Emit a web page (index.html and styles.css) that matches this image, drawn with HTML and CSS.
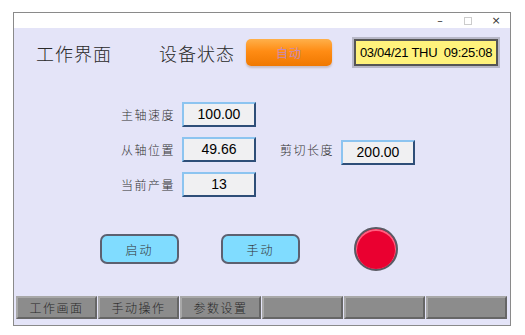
FILE: index.html
```html
<!DOCTYPE html>
<html lang="zh">

<head>
    <meta charset="UTF-8">
    <meta name="viewport" content="width=device-width, initial-scale=1.0">
    <title>工作界面</title>
    <link rel="stylesheet" href="styles.css">
</head>

<body>
    <div class="window">
        <div class="titlebar">
            <span class="win-btn">&#8211;</span>
            <span class="win-btn win-max"></span>
            <span class="win-btn">&#215;</span>
        </div>

        <div class="content">
            <div class="header">
                <h1 class="caption">工作界面</h1>
                <h2 class="caption caption-status">设备状态</h2>
                <div class="mode-btn">自动</div>
                <div class="clock">
                    <div class="clock-inner">03/04/21&nbsp;THU&nbsp;&nbsp;09:25:08</div>
                </div>
            </div>

            <div class="params">
                <div class="param-row">
                    <span class="label">主轴速度</span>
                    <div class="value">100.00</div>
                </div>
                <div class="param-row">
                    <span class="label">从轴位置</span>
                    <div class="value">49.66</div>
                    <span class="label label-cut">剪切长度</span>
                    <div class="value value-cut">200.00</div>
                </div>
                <div class="param-row">
                    <span class="label">当前产量</span>
                    <div class="value">13</div>
                </div>
            </div>

            <div class="actions">
                <button class="action-btn">启动</button>
                <button class="action-btn action-manual">手动</button>
                <div class="lamp"></div>
            </div>

            <div class="tabs">
                <div class="tab">工作画面</div>
                <div class="tab">手动操作</div>
                <div class="tab">参数设置</div>
                <div class="tab"></div>
                <div class="tab"></div>
                <div class="tab"></div>
            </div>
        </div>
    </div>
</body>

</html>
```

FILE: styles.css
```css
body {
    margin: 0;
    padding: 0;
    background-color: #fff;
    font-family: "Noto Sans CJK SC", "Liberation Sans", sans-serif;
}

.window {
    margin: 12px 0 0 13px;
    width: 496px;
    height: 312px;
    border: 1px solid #8a8a8a;
    display: flex;
    flex-direction: column;
}

.titlebar {
    height: 15px;
    background-color: #fff;
    display: flex;
    justify-content: flex-end;
    align-items: center;
    padding-right: 8px;
    gap: 16px;
}

.win-btn {
    width: 12px;
    font-family: "DejaVu Sans", sans-serif;
    font-size: 11px;
    line-height: 15px;
    color: #333;
    text-align: center;
}

.win-max {
    width: 6px;
    height: 6px;
    border: 1px solid #ccc;
    margin: 0 2px;
}

.content {
    flex: 1;
    background-color: #e4e4f8;
    display: flex;
    flex-direction: column;
}

.header {
    display: flex;
    align-items: center;
    height: 31px;
    margin-top: 9px;
    padding-left: 22px;
}

.caption {
    margin: 0;
    font-size: 18px;
    font-weight: 300;
    letter-spacing: 1px;
    color: #2a2a2a;
    width: 74px;
    white-space: nowrap;
}

.caption-status {
    margin-left: 49px;
}

.mode-btn {
    margin-left: 13px;
    width: 86px;
    height: 27px;
    border-radius: 5px;
    background: linear-gradient(#ffb04a, #ff8c14 45%, #f07800);
    box-shadow: 0 2px 2px rgba(120, 80, 40, 0.25);
    color: #c58ab8;
    font-size: 12px;
    text-align: center;
    line-height: 27px;
    letter-spacing: 1px;
}

.clock {
    margin-left: 20px;
    width: 148px;
    height: 31px;
    box-sizing: border-box;
    border: 2px solid #b8b8c8;
}

.clock-inner {
    height: 100%;
    box-sizing: border-box;
    border: 2px solid #555;
    background-color: #fff27c;
    font-family: "Liberation Sans", Arial, sans-serif;
    font-size: 13px;
    line-height: 23px;
    text-align: center;
    color: #000;
    white-space: nowrap;
    letter-spacing: -0.3px;
}

.params {
    margin-top: 34px;
    padding-left: 107px;
    display: flex;
    flex-direction: column;
    gap: 10px;
}

.param-row {
    display: flex;
    align-items: center;
    height: 25px;
}

.label {
    width: 61px;
    font-size: 12px;
    font-weight: 300;
    letter-spacing: 1.5px;
    color: #333;
    white-space: nowrap;
}

.value {
    width: 74px;
    height: 25px;
    box-sizing: border-box;
    border: 2px solid;
    border-color: #8cc4f0 #2e4e78 #2e4e78 #8cc4f0;
    background-color: #f0f0f2;
    font-family: "Liberation Sans", Arial, sans-serif;
    font-size: 14px;
    line-height: 21px;
    text-align: center;
    color: #000;
}

.label-cut {
    margin-left: 24px;
    width: 61px;
}

.value-cut {
    margin-top: 6px;
}

.actions {
    margin-top: 30px;
    padding-left: 86px;
    display: flex;
    align-items: center;
}

.action-btn {
    width: 79px;
    height: 30px;
    border: 2px solid #5c6070;
    border-radius: 7px;
    background-color: #80dcff;
    font-family: "Noto Sans CJK SC", sans-serif;
    font-size: 12px;
    font-weight: 300;
    letter-spacing: 2px;
    color: #333;
    padding: 0;
}

.action-manual {
    margin-left: 42px;
}

.lamp {
    margin-left: 54px;
    width: 44px;
    height: 44px;
    box-sizing: border-box;
    border-radius: 50%;
    background-color: #ea0030;
    border: 2px solid #5a5a64;
    box-shadow: inset 0 1px 0 1px #ff6080;
}

.tabs {
    margin-top: auto;
    margin-bottom: 6px;
    padding-left: 2px;
    display: flex;
    gap: 1px;
}

.tab {
    width: 81px;
    height: 23px;
    box-sizing: border-box;
    border: 2px solid;
    border-color: #a8a8a8 #666 #666 #a8a8a8;
    background-color: #8c8c8c;
    font-size: 12px;
    font-weight: 300;
    letter-spacing: 1.5px;
    line-height: 19px;
    text-align: center;
    color: #2a2a2a;
}
```
